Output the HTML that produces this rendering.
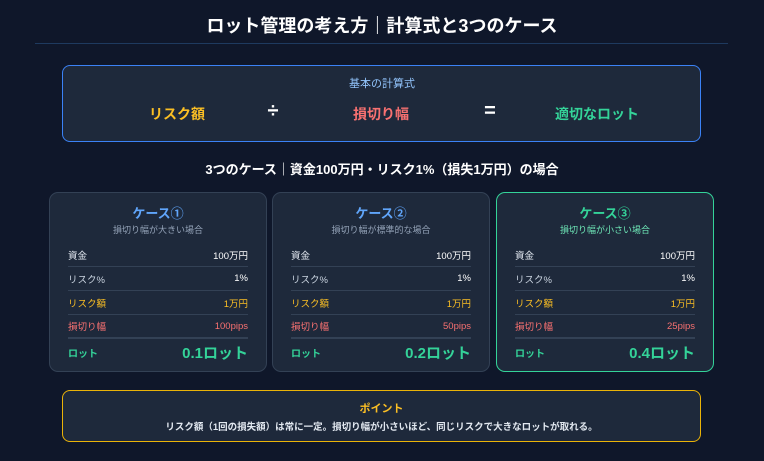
<!DOCTYPE html>
<html><head><meta charset="utf-8"><style>
*{margin:0;padding:0;box-sizing:border-box}
body{width:764px;height:461px;background:#0f172a;font-family:"Liberation Sans","Noto Sans CJK JP",sans-serif;color:#f1f5f9;position:relative;overflow:hidden}
.abs{position:absolute}
.title{left:0;width:764px;top:12px;text-align:center;font-size:18px;font-weight:bold;color:#fff}
.hr{left:35px;width:693px;top:43px;height:1px;background:#1e3a5f}
.formula{left:62px;top:65px;width:639px;height:77px;border:1.5px solid #3b82f6;border-radius:8px;background:#1e293b}
.ft{font-weight:bold;font-size:14px;top:104px;transform:translateX(-50%);white-space:nowrap}
.sub{left:0;width:764px;top:159px;text-align:center;font-size:13px;font-weight:bold;color:#fff}
.card{top:192px;width:218px;height:180px;border:1px solid #334155;border-radius:9px;background:#1e293b}
.card .h{position:absolute;left:0;width:100%;top:10px;text-align:center;font-size:13px;font-weight:bold;color:#60a5fa}
.card .s{position:absolute;left:0;width:100%;top:30px;text-align:center;font-size:9px;color:#94a3b8}
.row{position:absolute;left:18px;right:18px;height:24px;font-size:9.5px;display:flex;justify-content:space-between;align-items:center;border-bottom:1px solid #334155}
.lot{position:absolute;left:18px;right:18px;top:149px;display:flex;justify-content:space-between;align-items:center;color:#34d399;font-weight:bold}
.point{left:62px;top:390px;width:639px;height:52px;border:1.5px solid #eab308;border-radius:8px;background:#1e293b;text-align:center}
</style></head><body>
<div class="abs title">ロット管理の考え方｜計算式と3つのケース</div>
<div class="abs hr"></div>
<div class="abs formula"></div>
<div class="abs" style="left:0;width:764px;top:75px;text-align:center;font-size:11px;color:#93c5fd">基本の計算式</div>
<div class="abs ft" style="left:177px;color:#fbbf24">リスク額</div>
<div class="abs ft" style="left:273px;color:#fff;font-size:20px;top:100px">÷</div>
<div class="abs ft" style="left:381px;color:#f87171">損切り幅</div>
<div class="abs ft" style="left:490px;color:#fff;font-size:20px;top:100px">=</div>
<div class="abs ft" style="left:597px;color:#34d399">適切なロット</div>
<div class="abs sub">3つのケース｜資金100万円・リスク1%（損失1万円）の場合</div>

<div class="abs card" style="left:49px">
<div class="h">ケース①</div><div class="s">損切り幅が大きい場合</div>
<div class="row" style="top:50px"><span style="color:#e2e8f0">資金</span><span style="color:#fff">100万円</span></div>
<div class="row" style="top:74px"><span style="color:#cbd5e1">リスク%</span><span style="color:#fff">1%</span></div>
<div class="row" style="top:98px;color:#fbbf24"><span>リスク額</span><span>1万円</span></div>
<div class="row" style="top:122px;color:#f87171;border-bottom:2px solid #334155"><span>損切り幅</span><span>100pips</span></div>
<div class="lot"><span style="font-size:10px">ロット</span><span style="font-size:15px">0.1ロット</span></div>
</div>
<div class="abs card" style="left:272px">
<div class="h">ケース②</div><div class="s">損切り幅が標準的な場合</div>
<div class="row" style="top:50px"><span style="color:#e2e8f0">資金</span><span style="color:#fff">100万円</span></div>
<div class="row" style="top:74px"><span style="color:#cbd5e1">リスク%</span><span style="color:#fff">1%</span></div>
<div class="row" style="top:98px;color:#fbbf24"><span>リスク額</span><span>1万円</span></div>
<div class="row" style="top:122px;color:#f87171;border-bottom:2px solid #334155"><span>損切り幅</span><span>50pips</span></div>
<div class="lot"><span style="font-size:10px">ロット</span><span style="font-size:15px">0.2ロット</span></div>
</div>
<div class="abs card" style="left:496px;border:1.5px solid #34d399">
<div class="h" style="color:#34d399">ケース③</div><div class="s" style="color:#6ee7b7">損切り幅が小さい場合</div>
<div class="row" style="top:50px"><span style="color:#e2e8f0">資金</span><span style="color:#fff">100万円</span></div>
<div class="row" style="top:74px"><span style="color:#cbd5e1">リスク%</span><span style="color:#fff">1%</span></div>
<div class="row" style="top:98px;color:#fbbf24"><span>リスク額</span><span>1万円</span></div>
<div class="row" style="top:122px;color:#f87171;border-bottom:2px solid #334155"><span>損切り幅</span><span>25pips</span></div>
<div class="lot"><span style="font-size:10px">ロット</span><span style="font-size:15px">0.4ロット</span></div>
</div>

<div class="abs point">
<div style="margin-top:9px;font-size:11px;font-weight:bold;color:#fbbf24">ポイント</div>
<div style="margin-top:3px;font-size:9.5px;font-weight:bold;color:#e2e8f0">リスク額（1回の損失額）は常に一定。損切り幅が小さいほど、同じリスクで大きなロットが取れる。</div>
</div>
</body></html>
